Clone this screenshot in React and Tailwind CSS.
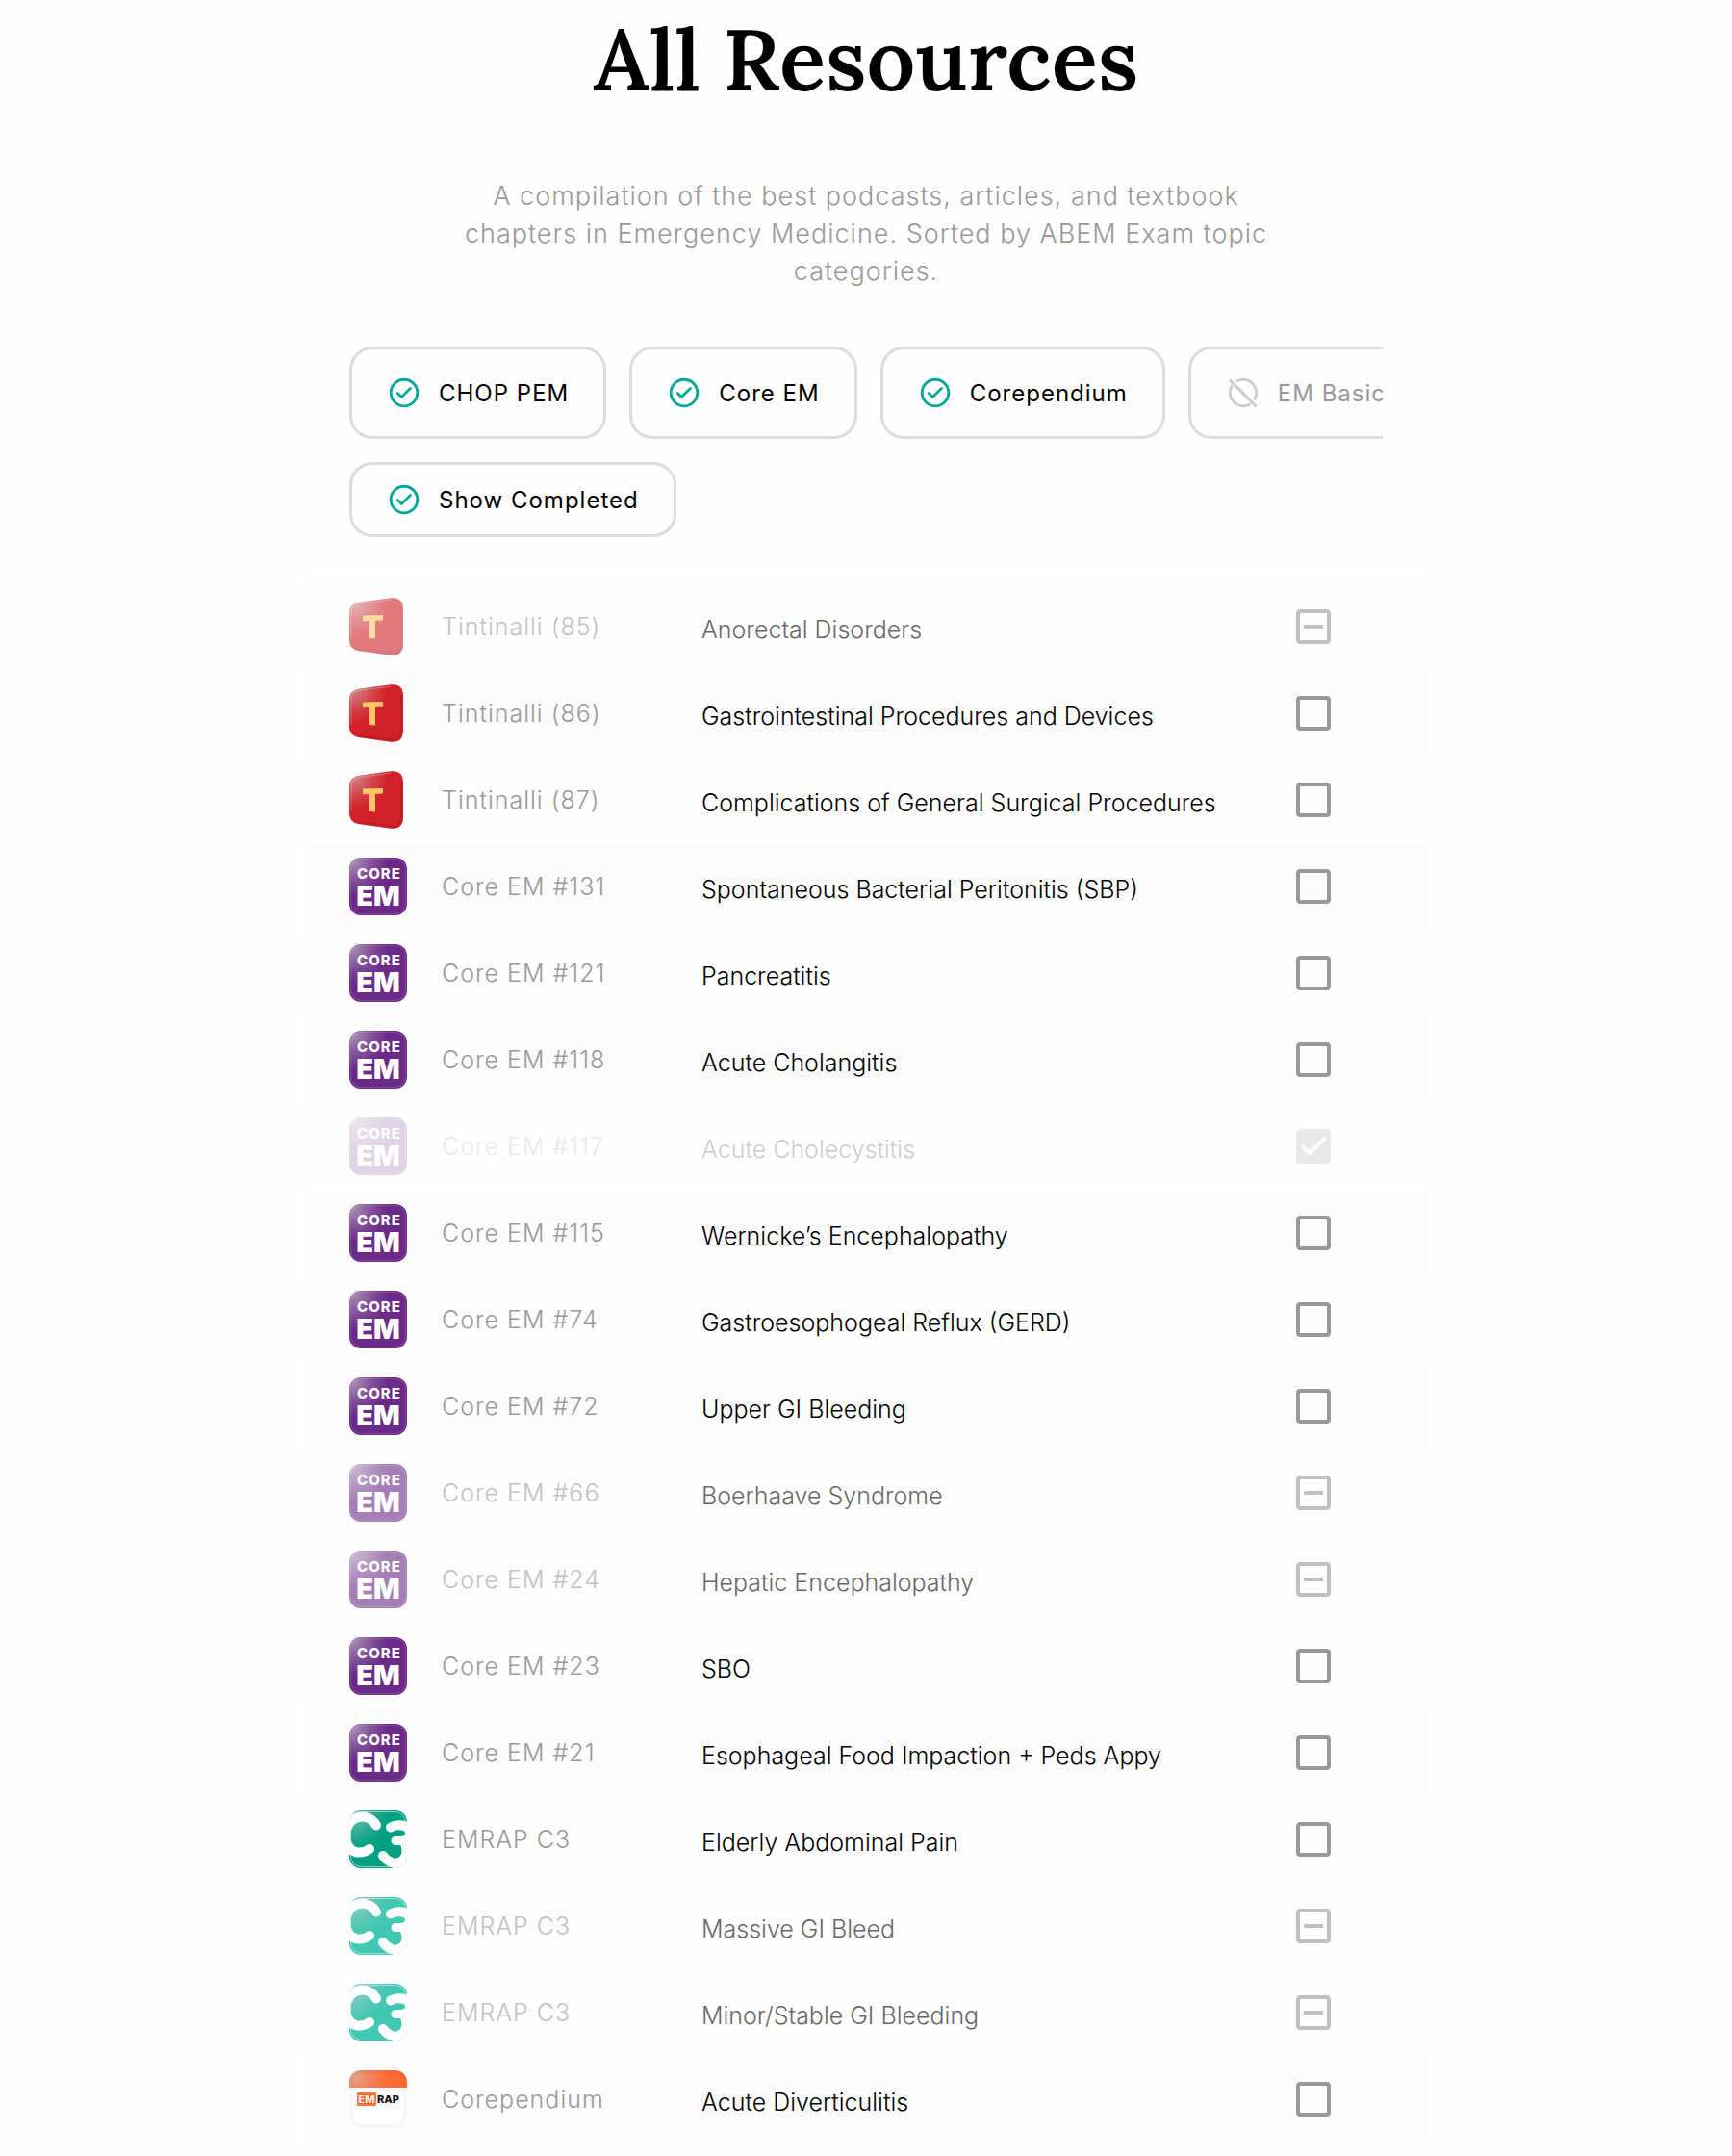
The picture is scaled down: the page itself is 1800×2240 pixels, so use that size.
import React, { useState } from 'react';
import { MdCheckBoxOutlineBlank, MdOutlineIndeterminateCheckBox, MdCheckBox } from 'react-icons/md';

const filters = [
    { id: 'chop', label: 'CHOP PEM', on: true },
    { id: 'coreem', label: 'Core EM', on: true },
    { id: 'corependium', label: 'Corependium', on: true },
    { id: 'embasic', label: 'EM Basic', on: false },
];

// state: todo | skipped | done
const initialResources = [
    { id: 1, logo: 'tintinalli', source: 'Tintinalli (85)', title: 'Anorectal Disorders', state: 'skipped' },
    { id: 2, logo: 'tintinalli', source: 'Tintinalli (86)', title: 'Gastrointestinal Procedures and Devices', state: 'todo' },
    { id: 3, logo: 'tintinalli', source: 'Tintinalli (87)', title: 'Complications of General Surgical Procedures', state: 'todo' },
    { id: 4, logo: 'coreem', source: 'Core EM #131', title: 'Spontaneous Bacterial Peritonitis (SBP)', state: 'todo' },
    { id: 5, logo: 'coreem', source: 'Core EM #121', title: 'Pancreatitis', state: 'todo' },
    { id: 6, logo: 'coreem', source: 'Core EM #118', title: 'Acute Cholangitis', state: 'todo' },
    { id: 7, logo: 'coreem', source: 'Core EM #117', title: 'Acute Cholecystitis', state: 'done' },
    { id: 8, logo: 'coreem', source: 'Core EM #115', title: 'Wernicke’s Encephalopathy', state: 'todo' },
    { id: 9, logo: 'coreem', source: 'Core EM #74', title: 'Gastroesophogeal Reflux (GERD)', state: 'todo' },
    { id: 10, logo: 'coreem', source: 'Core EM #72', title: 'Upper GI Bleeding', state: 'todo' },
    { id: 11, logo: 'coreem', source: 'Core EM #66', title: 'Boerhaave Syndrome', state: 'skipped' },
    { id: 12, logo: 'coreem', source: 'Core EM #24', title: 'Hepatic Encephalopathy', state: 'skipped' },
    { id: 13, logo: 'coreem', source: 'Core EM #23', title: 'SBO', state: 'todo' },
    { id: 14, logo: 'coreem', source: 'Core EM #21', title: 'Esophageal Food Impaction + Peds Appy', state: 'todo' },
    { id: 15, logo: 'c3', source: 'EMRAP C3', title: 'Elderly Abdominal Pain', state: 'todo' },
    { id: 16, logo: 'c3', source: 'EMRAP C3', title: 'Massive GI Bleed', state: 'skipped' },
    { id: 17, logo: 'c3', source: 'EMRAP C3', title: 'Minor/Stable GI Bleeding', state: 'skipped' },
    { id: 18, logo: 'emrap', source: 'Corependium', title: 'Acute Diverticulitis', state: 'todo' },
];

// shared gloss and clip shapes for the app logos
const LogoDefs = () => (
    <svg className="absolute w-0 h-0" aria-hidden="true">
        <defs>
            <radialGradient id="gloss" gradientUnits="userSpaceOnUse" cx="4" cy="4" r="36">
                <stop offset="0" stopColor="#cfcfcf" stopOpacity="0.6" />
                <stop offset="0.6" stopColor="#cfcfcf" stopOpacity="0.2" />
                <stop offset="1" stopColor="#cfcfcf" stopOpacity="0" />
            </radialGradient>
            <clipPath id="tile"><rect width="60" height="60" rx="12" /></clipPath>
        </defs>
    </svg>
);

const TintinalliLogo = () => (
    <svg viewBox="0 0 60 60" className="size-[60px]" aria-hidden="true">
        <path d="M9 5 L43 0.300 Q56 -1 56 12 V48 Q56 61 43 59.700 L9 55 Q0 53 0 44 V16 Q0 7 9 5Z" fill="#d12229" />
        <path d="M9 5 L43 0.300 Q56 -1 56 12 V48 Q56 61 43 59.700 L9 55 Q0 53 0 44 V16 Q0 7 9 5Z" fill="url(#gloss)" />
        <path d="M2 42 V16 Q2 8 10 6.500 L43 2" fill="none" stroke="#fff" strokeOpacity="0.3" strokeWidth="1" />
        <path d="M54 12 V47 Q54 59 43 57.500 L10 53" fill="none" stroke="#7d1015" strokeOpacity="0.25" strokeWidth="2" />
        <path d="M14 18.500 L35 18 V23.500 L27 23.800 V42.500 L21 42 V24 L14 24.300Z" fill="#fdc766" />
    </svg>
);

const CoreEmLogo = () => (
    <svg viewBox="0 0 60 60" className="size-[60px]" aria-hidden="true">
        <rect width="60" height="60" rx="12" fill="#6b2a88" />
        <rect width="60" height="60" rx="12" fill="url(#gloss)" />
        <rect x="1.500" y="1.500" width="57" height="57" rx="11" fill="none" stroke="#fff" strokeOpacity="0.14" strokeWidth="1" />
        <text x="31" y="22" textAnchor="middle" fontFamily="Inter, sans-serif" fontWeight="800" fontSize="15" letterSpacing="1" fill="#fff">CORE</text>
        <text x="30" y="50" textAnchor="middle" fontFamily="Inter, sans-serif" fontWeight="900" fontSize="29" fill="#fff">EM</text>
    </svg>
);

const C3Logo = ({ muted }) => (
    <svg viewBox="0 0 60 60" className="size-[60px]" aria-hidden="true">
        <g clipPath="url(#tile)">
            <rect width="60" height="60" fill={muted ? '#41c8b3' : '#00a181'} />
            <rect width="60" height="60" fill="url(#gloss)" />
            <g fill="none" stroke="#fff" strokeWidth="10" strokeLinecap="round">
                <path d="M28 15.500 C24 8.500 17 5.500 10 7 C-8 10 -8 41 8 43.500 C14 44 18 42.500 21 40" />
                <path d="M43 17.500 C49 14 57 15 66 19" />
                <path d="M48 31.500 H53" strokeWidth="9" />
                <path d="M35 47 C39 53 47 57 62 57.500" />
            </g>
            {/* right edge of the 3, with the round ends of both counters */}
            <path d="M54 19.500 Q58 21 58 24 Q57.500 27 53 27 V36 Q54.500 38 54.500 43 Q54 48 49 49.500 Q46 50.500 43 50 L50 60 L60 58 V18Z" fill="#fff" />
            <rect x="1.500" y="1.500" width="57" height="57" rx="11" fill="none" stroke="#e8efed" strokeOpacity="0.6" strokeWidth="1" />
        </g>
    </svg>
);

const EmrapLogo = () => (
    <svg viewBox="0 0 60 60" className="size-[60px]" aria-hidden="true">
        <g clipPath="url(#tile)">
            <rect width="60" height="60" fill="#fff" />
            <rect width="60" height="18" fill="#ff6a33" />
            <rect width="60" height="18" fill="url(#gloss)" />
            <rect x="2" y="2" width="56" height="56" rx="11" fill="none" stroke="#000" strokeOpacity="0.03" strokeWidth="4" />
            <rect x="8" y="23" width="20" height="14" rx="1" fill="#fd6222" />
            <rect x="9" y="24" width="18" height="12" fill="none" stroke="#ffa27c" strokeWidth="0.700" />
            <text x="18" y="34" textAnchor="middle" fontFamily="Inter, sans-serif" fontWeight="700" fontSize="11" fill="#fff">EM</text>
            <text x="40.500" y="34" textAnchor="middle" fontFamily="Inter, sans-serif" fontWeight="800" fontSize="11" fill="#111">RAP</text>
        </g>
    </svg>
);

const logos = { tintinalli: TintinalliLogo, coreem: CoreEmLogo, c3: C3Logo, emrap: EmrapLogo };

const CircleCheck = () => (
    <svg viewBox="0 0 24 24" className="size-9 shrink-0 text-[#00a896]" fill="none" stroke="currentColor" strokeLinecap="round" strokeLinejoin="round" aria-hidden="true">
        <circle cx="12" cy="12" r="9.200" strokeWidth="1.900" />
        <path d="M7.500 12.300 L10.200 15 L16.300 9" strokeWidth="1.800" />
    </svg>
);

const CircleSlash = () => (
    <svg viewBox="0 0 24 24" className="size-9 shrink-0 text-[#ccc]" fill="none" stroke="currentColor" strokeWidth="1.900" strokeLinecap="round" aria-hidden="true">
        <path d="M3 3.500 L20.500 21" />
        <path d="M7.800 3.800 A9.200 9.200 0 0 1 20 16.500" />
        <path d="M4 7.500 A9.200 9.200 0 0 0 16.200 20.200" />
    </svg>
);

const FilterChip = ({ label, on, onClick, tall }) => (
    <button type="button" onClick={onClick} aria-pressed={on}
        className={`flex shrink-0 items-center gap-[18px] px-9 rounded-3xl border-3 border-[#ddd] whitespace-nowrap text-2xl tracking-[1px] cursor-pointer
            ${tall ? 'h-24' : 'h-[78px]'} ${on ? 'text-black' : 'text-[#999]'}`}>
        {on ? <CircleCheck /> : <CircleSlash />}
        <span className="pt-[2px]">{label}</span>
    </button>
);

const boxIcons = { todo: MdCheckBoxOutlineBlank, skipped: MdOutlineIndeterminateCheckBox, done: MdCheckBox };
const fades = { todo: '', skipped: 'opacity-60', done: 'opacity-20' };

const ResourceRow = ({ item, onToggle }) => {
    const Logo = logos[item.logo];
    const Box = boxIcons[item.state];
    const fade = fades[item.state];
    const muted = item.state === 'skipped';
    // the C3 logo has its own muted colours
    const logoFade = item.logo === 'c3' && muted ? '' : fade;

    return (
        <li className={`flex h-[90px] items-center px-12 odd:bg-[#fefefe] ${muted ? 'even:bg-[#fdfdfd]' : 'even:bg-[#fcfcfc]'}`}>
            <div className={`w-24 shrink-0 ${logoFade}`}><Logo muted={muted} /></div>
            <div className={`w-[270px] shrink-0 pt-[2px] text-[25px] font-light tracking-[1px] text-[#999] ${fade}`}>{item.source}</div>
            <label htmlFor={`box-${item.id}`} className={`flex-1 pt-2 text-[25px] font-[350] text-black ${fade}`}>{item.title}</label>
            <div className={`relative mr-12 size-12 shrink-0 text-[#999] ${fade}`}>
                <Box className="size-12" />
                <input id={`box-${item.id}`} type="checkbox" checked={item.state === 'done'} onChange={() => onToggle(item.id)}
                    className="absolute inset-0 size-12 opacity-0 cursor-pointer" />
            </div>
        </li>
    );
};

const App = () => {
    const [chips, setChips] = useState(filters);
    const [showCompleted, setShowCompleted] = useState(true);
    const [resources, setResources] = useState(initialResources);

    const toggleChip = (id) => setChips(chips.map(c => (c.id === id ? { ...c, on: !c.on } : c)));
    const toggleItem = (id) => setResources(resources.map(r => (
        r.id === id ? { ...r, state: r.state === 'done' ? 'todo' : 'done' } : r
    )));
    const visible = showCompleted ? resources : resources.filter(r => r.state !== 'done');

    return (
        <div className="min-h-screen bg-[#fefefe] font-['Inter',sans-serif]">
            <LogoDefs />
            <main className="mx-auto max-w-[1170px]">
                <header className="px-12 pt-3 text-center">
                    <h1 className="text-[89px] leading-[98px] font-semibold text-black font-['Lora','Liberation_Serif',serif]">All Resources</h1>
                    <p className="mx-auto mt-[74px] max-w-[864px] text-[27px] leading-[39px] font-light tracking-[1px] text-[#999]">
                        A compilation of the best podcasts, articles, and textbook chapters in Emergency Medicine. Sorted by ABEM Exam topic categories.
                    </p>
                </header>

                <section className="mt-[59px] px-12" aria-label="Filters">
                    <div className="flex gap-6 overflow-hidden">
                        {chips.map(chip => (
                            <FilterChip key={chip.id} label={chip.label} on={chip.on} tall onClick={() => toggleChip(chip.id)} />
                        ))}
                    </div>
                    <div className="mt-6 flex">
                        <FilterChip label="Show Completed" on={showCompleted} onClick={() => setShowCompleted(!showCompleted)} />
                    </div>
                </section>

                <ul className="mt-[39px] border-t-9 border-[#fcfcfc]">
                    {visible.map(item => (
                        <ResourceRow key={item.id} item={item} onToggle={toggleItem} />
                    ))}
                </ul>
            </main>
        </div>
    );
};

export default App;
